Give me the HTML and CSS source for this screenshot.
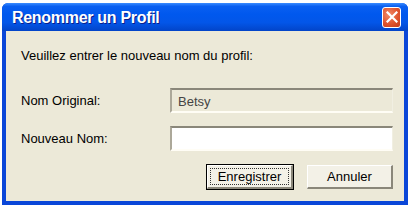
FILE: index.html
```html
<!DOCTYPE html>
<html lang="fr">

<head>
    <meta charset="UTF-8">
    <title>Renommer un Profil</title>
    <link rel="stylesheet" href="styles.css">
</head>

<body>
    <div class="window">
        <div class="title-bar">
            <span class="title">Renommer un Profil</span>
            <span class="close-btn">
                <svg width="12" height="12" viewBox="0 0 12 12">
                    <path d="M1.5 1.5 L10.5 10.5 M10.5 1.5 L1.5 10.5" stroke="#fff" stroke-width="2.2" stroke-linecap="square" />
                </svg>
            </span>
        </div>
        <div class="client">
            <div class="intro">Veuillez entrer le nouveau nom du profil:</div>
            <div class="row">
                <label>Nom Original:</label>
                <div class="field disabled">Betsy</div>
            </div>
            <div class="row">
                <label>Nouveau Nom:</label>
                <div class="field"></div>
            </div>
            <div class="buttons">
                <button class="btn default"><span class="focus">Enregistrer</span></button>
                <button class="btn">Annuler</button>
            </div>
        </div>
    </div>
</body>

</html>
```

FILE: styles.css
```css
body {
    margin: 0;
    padding: 3px 4px 2px 2px;
    background: #fff;
    font-family: "Liberation Sans", Arial, sans-serif;
    font-size: 13px;
    color: #000;
}

.window {
    width: 406px;
    height: 202px;
    display: flex;
    flex-direction: column;
    background: #0a46d8;
    border-radius: 6px 6px 0 0;
    box-sizing: border-box;
}

.title-bar {
    height: 28px;
    display: flex;
    align-items: center;
    justify-content: space-between;
    padding: 0 7px 0 10px;
    border-radius: 6px 6px 0 0;
    background: linear-gradient(to bottom, #3a8cff 0%, #0a5ff0 12%, #0058ee 40%, #0356e8 70%, #0244c8 100%);
}

.title {
    color: #fff;
    font-weight: bold;
    font-size: 16px;
    letter-spacing: -0.3px;
    text-shadow: 1px 1px 0 #0a1e8c;
    margin-top: 1px;
}

.close-btn {
    width: 19px;
    height: 21px;
    border: 1px solid #fff;
    border-radius: 3px;
    background: radial-gradient(circle at 35% 35%, #f08a6a 0%, #e0542e 55%, #c23a1a 100%);
    display: flex;
    align-items: center;
    justify-content: center;
    box-sizing: border-box;
}

.client {
    flex: 1;
    margin: 0 4px 4px 4px;
    background: #ece9d8;
    padding: 17px 11px 0 15px;
    display: flex;
    flex-direction: column;
}

.intro {
    height: 16px;
    line-height: 16px;
    margin-bottom: 24px;
}

.row {
    display: flex;
    align-items: center;
    justify-content: space-between;
    margin-bottom: 13px;
}

.field {
    width: 223px;
    height: 25px;
    box-sizing: border-box;
    background: #fff;
    border-top: 2px solid #8a877a;
    border-left: 2px solid #aca899;
    border-right: 1px solid #f1efe2;
    border-bottom: 2px solid #fffdf5;
    padding: 2px 6px;
    line-height: 19px;
}

.field.disabled {
    background: #ece9d8;
    color: #444;
}

.buttons {
    display: flex;
    justify-content: flex-end;
    gap: 14px;
    margin-top: 1px;
}

.btn {
    width: 86px;
    height: 24px;
    font-family: inherit;
    font-size: 13px;
    color: #000;
    background: #f3f1e7;
    border-top: 1px solid #fff;
    border-left: 1px solid #fff;
    border-right: 2px solid #8a877a;
    border-bottom: 2px solid #8a877a;
    padding: 0;
    box-sizing: border-box;
}

.btn.default {
    outline: 1px solid #000;
    outline-offset: 0;
}

.focus {
    display: block;
    margin: 2px;
    border: 1px dotted #333;
    line-height: 15px;
}
```
